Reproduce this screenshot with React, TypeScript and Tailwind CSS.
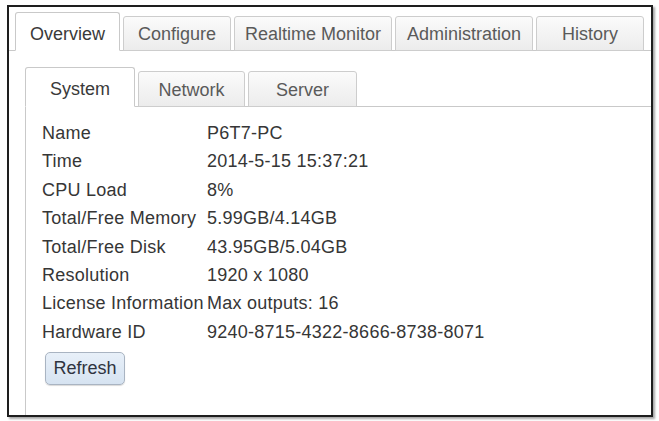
import React, { useState } from 'react';

const outerTabs = [
  { label: 'Overview', w: 'w-[105px]' },
  { label: 'Configure', w: 'w-[108px]' },
  { label: 'Realtime Monitor', w: 'w-[158px]' },
  { label: 'Administration', w: 'w-[138px]' },
  { label: 'History', w: 'w-[108px]' },
];

const innerTabs = [
  { label: 'System', w: 'w-[110px]' },
  { label: 'Network', w: 'w-[107px]' },
  { label: 'Server', w: 'w-[109px]' },
];

const rows: [string, string][] = [
  ['Name', 'P6T7-PC'],
  ['Time', '2014-5-15 15:37:21'],
  ['CPU Load', '8%'],
  ['Total/Free Memory', '5.99GB/4.14GB'],
  ['Total/Free Disk', '43.95GB/5.04GB'],
  ['Resolution', '1920 x 1080'],
  ['License Information', 'Max outputs: 16'],
  ['Hardware ID', '9240-8715-4322-8666-8738-8071'],
];

const Tab: React.FC<{ label: string; w: string; active: boolean; onClick: () => void; tall: string; short: string }> = ({
  label,
  w,
  active,
  onClick,
  tall,
  short,
}) => (
  <button
    onClick={onClick}
    className={
      active
        ? `${w} ${tall} -mb-px pt-[5px] tracking-normal flex items-center justify-center border border-[#c9c9c9] border-b-white rounded-t-[3px] bg-white text-[#3a3a3a]`
        : `${w} ${short} -mb-px pt-[2px] tracking-normal flex items-center justify-center border border-[#cdcdcd] rounded-t-[3px] bg-gradient-to-b from-[#fbfbfb] to-[#ececec] text-[#5a5a5a]`
    }
  >
    {label}
  </button>
);

export default function App() {
  const [outer, setOuter] = useState('Overview');
  const [inner, setInner] = useState('System');

  return (
    <div
      className="w-[659px] h-[421px] bg-white pt-[5px] pl-[7px] text-[18px] tracking-[0.25px]"
      style={{ fontFamily: '"Liberation Sans", Arial, sans-serif' }}
    >
      <div className="w-[646px] h-[412px] border-2 border-[#1e1e1e] shadow-[2px_2px_2px_rgba(0,0,0,0.35)] flex flex-col bg-white">
        {/* top tabs */}
        <div className="flex items-end gap-[3px] pl-[6px] pt-[5px] h-[44px] border-b border-[#c9c9c9]">
          {outerTabs.map((t) => (
            <Tab
              key={t.label}
              label={t.label}
              w={t.w}
              active={outer === t.label}
              onClick={() => setOuter(t.label)}
              tall="h-[39px]"
              short="h-[35px]"
            />
          ))}
        </div>

        <div className="flex-1 flex flex-col pl-[16px] pt-[16px]">
          {/* sub tabs */}
          <div className="flex items-end gap-[3px] h-[40px] border-b border-[#c9c9c9]">
            {innerTabs.map((t) => (
              <Tab
                key={t.label}
                label={t.label}
                w={t.w}
                active={inner === t.label}
                onClick={() => setInner(t.label)}
                tall="h-[40px]"
                short="h-[36px]"
              />
            ))}
          </div>

          <div className="flex-1 border-l border-[#c9c9c9] pl-[16px] pt-[12px] text-[#363636]">
            <div className="flex flex-col">
              {rows.map(([k, v]) => (
                <div key={k} className="flex leading-[28.4px] whitespace-nowrap">
                  <span className="w-[165px]">{k}</span>
                  <span>{v}</span>
                </div>
              ))}
            </div>
            <button className="mt-[6px] ml-[3px] w-[80px] h-[33px] rounded-[5px] border border-[#a9b4c2] bg-gradient-to-b from-[#e8f0f9] to-[#d6e3f1] text-[#2f3440] tracking-normal shadow-[0_1px_1px_rgba(0,0,0,0.15)]">
              Refresh
            </button>
          </div>
        </div>
      </div>
    </div>
  );
}
